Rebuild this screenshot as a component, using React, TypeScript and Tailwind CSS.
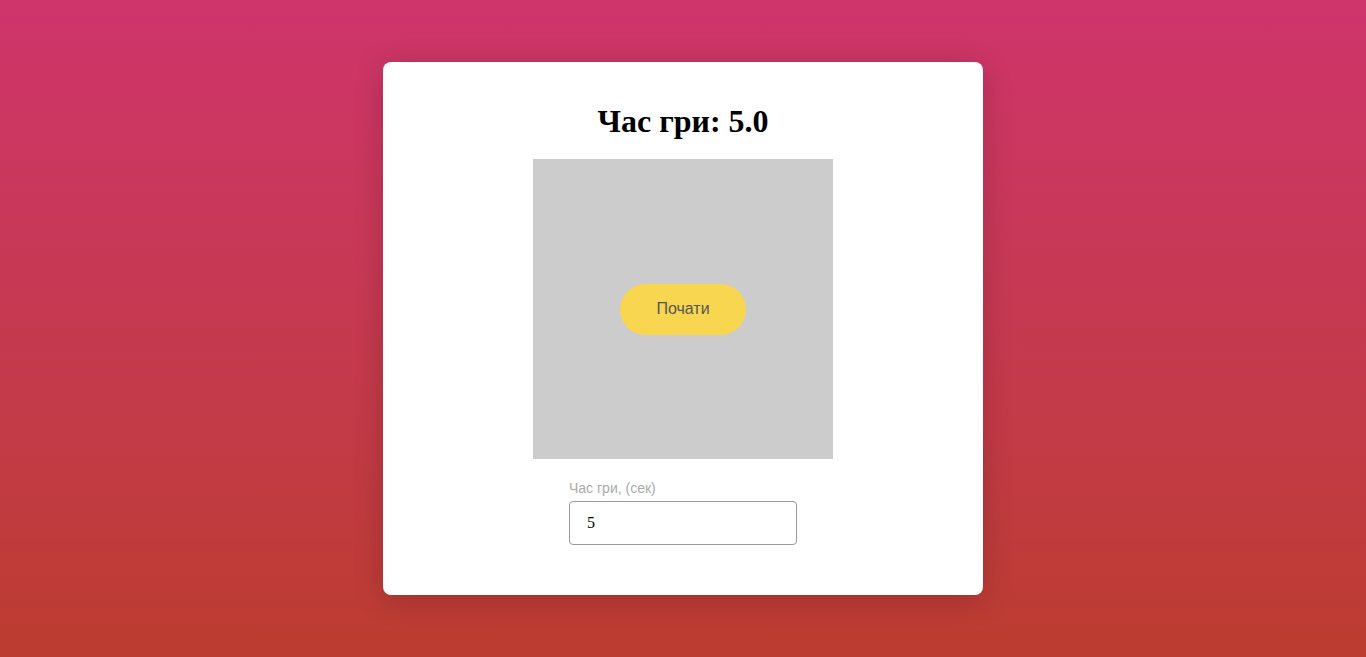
export default function App() {
  return (
    <div className="min-h-[657px] w-full bg-gradient-to-b from-[#cf346b] to-[#bc3c2f] flex justify-center pt-[62px]">
      <div className="w-[600px] h-[533px] bg-white rounded-[8px] shadow-[0_5px_30px_rgba(0,0,0,0.18)] flex flex-col items-center">
        <h1 className="mt-[41px] h-[37px] leading-[37px] text-[32px] font-bold text-black" style={{ fontFamily: '"Liberation Serif", "Times New Roman", serif' }}>
          Час гри: 5.0
        </h1>
        <div className="mt-[19px] w-[300px] h-[300px] bg-[#cccccc] flex items-center justify-center">
          <button className="w-[126px] h-[51px] rounded-full bg-[#f9d64f] text-[#555555] text-[16px]" style={{ fontFamily: '"Liberation Sans", Arial, sans-serif' }}>
            Почати
          </button>
        </div>
        <div className="mt-[21px] w-[228px] flex flex-col" style={{ fontFamily: '"Liberation Sans", Arial, sans-serif' }}>
          <label className="text-[14px] leading-[16px] text-[#aaaaaa]">Час гри, (сек)</label>
          <input
            defaultValue="5"
            className="mt-[5px] w-[228px] h-[44px] border border-[#999999] rounded-[4px] pl-[17px] text-[16px] text-black outline-none"
            style={{ fontFamily: '"Liberation Serif", "Times New Roman", serif' }}
          />
        </div>
      </div>
    </div>
  );
}
